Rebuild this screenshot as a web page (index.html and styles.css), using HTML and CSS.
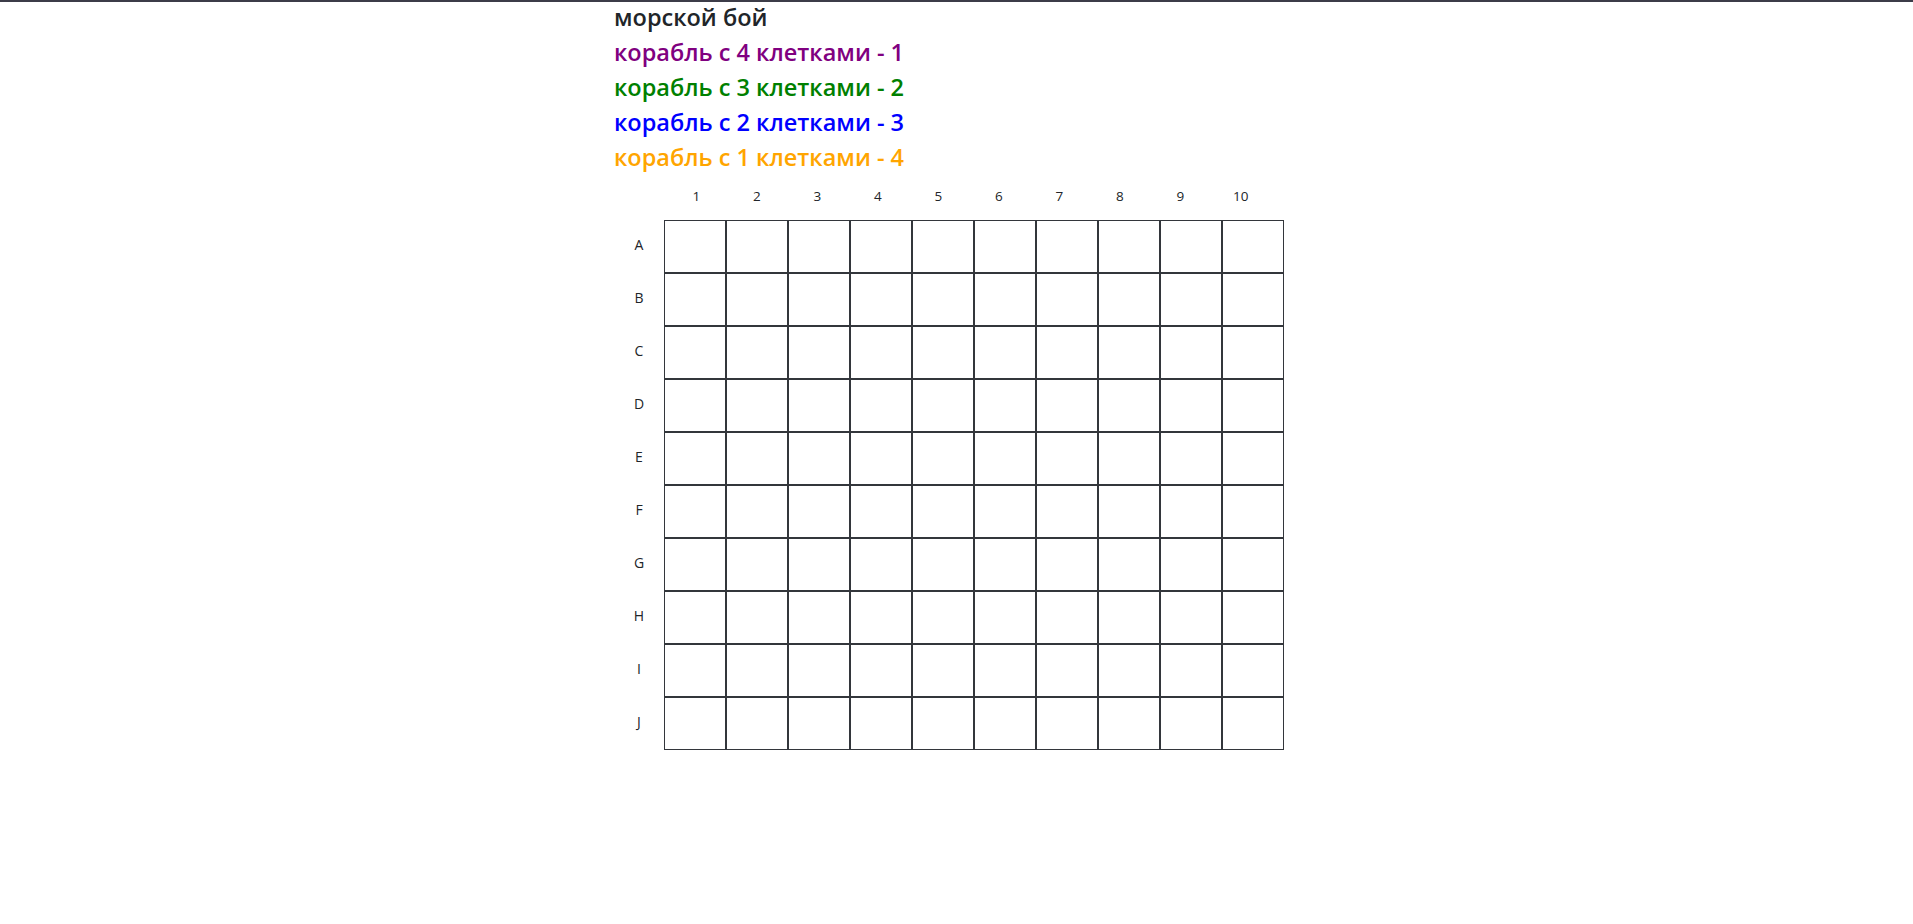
FILE: index.html
```html
<!DOCTYPE html>
<html lang="ru">
<head>
<meta charset="utf-8">
<title>морской бой</title>
<link rel="stylesheet" href="styles.css">
</head>
<body>
<div class="page">
  <div class="title">морской бой</div>
  <div class="ship ship-4">корабль с 4 клетками - 1</div>
  <div class="ship ship-3">корабль с 3 клетками - 2</div>
  <div class="ship ship-2">корабль с 2 клетками - 3</div>
  <div class="ship ship-1">корабль с 1 клетками - 4</div>
  <div class="cols">
    <span>1</span><span>2</span><span>3</span><span>4</span><span>5</span><span>6</span><span>7</span><span>8</span><span>9</span><span>10</span>
  </div>
  <table class="board">
    <tbody>
      <tr><th>A</th><td></td><td></td><td></td><td></td><td></td><td></td><td></td><td></td><td></td><td></td></tr>
      <tr><th>B</th><td></td><td></td><td></td><td></td><td></td><td></td><td></td><td></td><td></td><td></td></tr>
      <tr><th>C</th><td></td><td></td><td></td><td></td><td></td><td></td><td></td><td></td><td></td><td></td></tr>
      <tr><th>D</th><td></td><td></td><td></td><td></td><td></td><td></td><td></td><td></td><td></td><td></td></tr>
      <tr><th>E</th><td></td><td></td><td></td><td></td><td></td><td></td><td></td><td></td><td></td><td></td></tr>
      <tr><th>F</th><td></td><td></td><td></td><td></td><td></td><td></td><td></td><td></td><td></td><td></td></tr>
      <tr><th>G</th><td></td><td></td><td></td><td></td><td></td><td></td><td></td><td></td><td></td><td></td></tr>
      <tr><th>H</th><td></td><td></td><td></td><td></td><td></td><td></td><td></td><td></td><td></td><td></td></tr>
      <tr><th>I</th><td></td><td></td><td></td><td></td><td></td><td></td><td></td><td></td><td></td><td></td></tr>
      <tr><th>J</th><td></td><td></td><td></td><td></td><td></td><td></td><td></td><td></td><td></td><td></td></tr>
    </tbody>
  </table>
</div>
</body>
</html>
```

FILE: styles.css
```css
html, body {
  margin: 0;
  padding: 0;
  background: #ffffff;
}

body {
  border-top: 2px solid #3c3c48;
  font-family: "Open Sans", "Noto Sans", sans-serif;
  color: #212529;
}

.page {
  width: 685px;
  margin: 0 auto;
}

.title,
.ship {
  font-size: 23.5px;
  font-weight: 600;
  line-height: 35px;
  white-space: nowrap;
}

.title {
  color: #212529;
  margin-top: -2px;
}

.ship-4 { color: #800080; }
.ship-3 { color: #008000; }
.ship-2 { color: #0000ff; }
.ship-1 { color: #ffa500; }

.cols {
  display: flex;
  height: 45px;
  padding-left: 52px;
  align-items: center;
  font-size: 13.5px;
  color: #212529;
  padding-bottom: 4px;
  box-sizing: border-box;
}

.cols span {
  width: 60.5px;
  text-align: center;
}

.board {
  border-collapse: separate;
  border-spacing: 0;
}

.board th {
  font-weight: 400;
  font-size: 14px;
  color: #212529;
  width: 50px;
  padding: 0 0 4px 0;
  text-align: center;
  vertical-align: middle;
}

.board td {
  width: 60px;
  height: 51px;
  padding: 0;
  border: 1px solid #33363b;
  box-sizing: content-box;
}
```
